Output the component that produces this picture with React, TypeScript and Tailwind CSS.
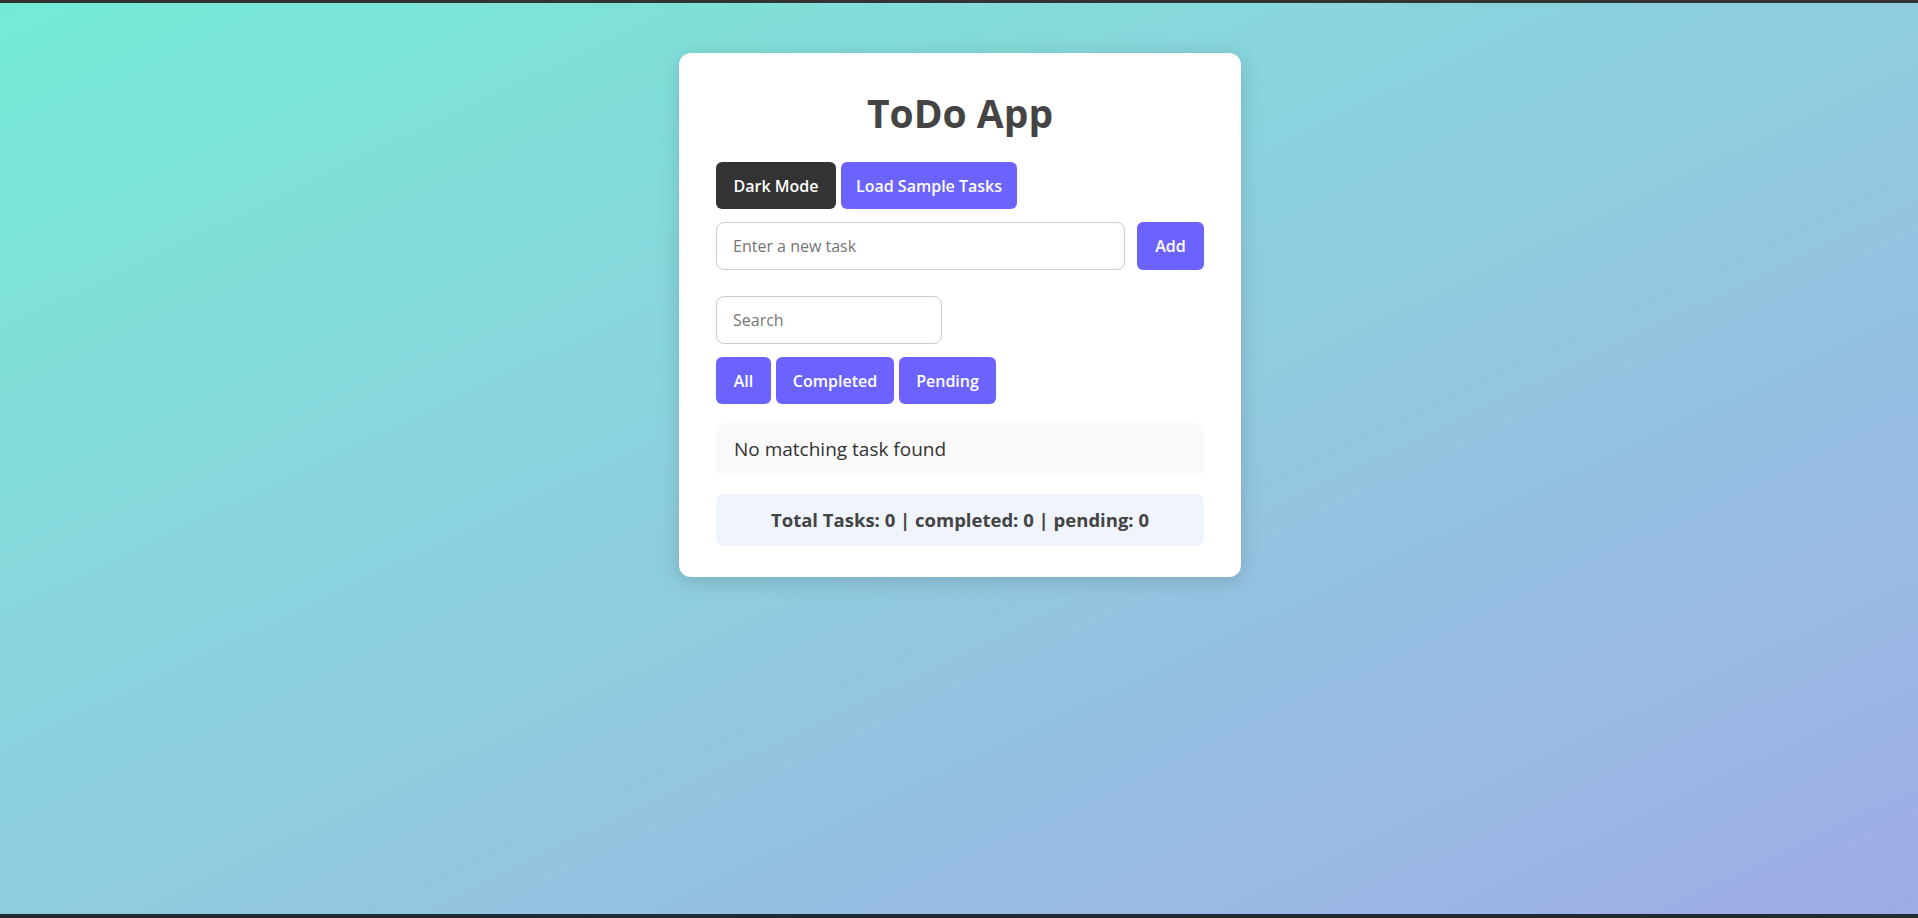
import { useState } from "react";

type Filter = "all" | "completed" | "pending";

interface Task {
  id: number;
  text: string;
  done: boolean;
}

const FONT = { fontFamily: '"Open Sans", "Noto Sans", sans-serif' };

export default function App() {
  const [tasks] = useState<Task[]>([]);
  const [filter, setFilter] = useState<Filter>("all");
  const [query, setQuery] = useState("");
  const [draft, setDraft] = useState("");

  const completed = tasks.filter((t) => t.done).length;
  const visible = tasks
    .filter((t) => (filter === "all" ? true : filter === "completed" ? t.done : !t.done))
    .filter((t) => t.text.toLowerCase().includes(query.toLowerCase()));

  return (
    <div className="flex h-[918px] w-full flex-col" style={FONT}>
      {/* top strip */}
      <div className="h-[3px] bg-[#333]" />

      <main className="flex flex-1 justify-center bg-gradient-to-br from-[#74ebd5] to-[#9face6]">
        <div className="mt-[50px] ml-[2px] h-fit w-[562px] rounded-[12px] bg-white px-[37px] pt-[36px] pb-[31px] shadow-[0_4px_20px_rgba(0,0,0,0.15)]">
          <h1 className="h-[48px] text-center text-[39px] leading-[48px] font-bold text-[#444]">
            ToDo App
          </h1>

          {/* Top actions */}
          <div className="mt-[25px] flex gap-[5px]">
            <button className="h-[47px] w-[120px] rounded-[6px] bg-[#333] text-[16px] font-semibold text-white">
              Dark Mode
            </button>
            <button className="h-[47px] w-[176px] rounded-[6px] bg-[#6c63ff] text-[16px] font-semibold text-white">
              Load Sample Tasks
            </button>
          </div>

          {/* New task */}
          <div className="mt-[13px] flex gap-[12px]">
            <input
              value={draft}
              onChange={(e) => setDraft(e.target.value)}
              placeholder="Enter a new task"
              className="h-[48px] w-[409px] rounded-[8px] border border-[#ccc] px-[16px] text-[16px] text-[#333] outline-none placeholder:text-[#757575]"
            />
            <button className="h-[48px] flex-1 rounded-[6px] bg-[#6c63ff] text-[16px] font-semibold text-white">
              Add
            </button>
          </div>

          {/* Search */}
          <input
            value={query}
            onChange={(e) => setQuery(e.target.value)}
            placeholder="Search"
            className="mt-[26px] block h-[48px] w-[226px] rounded-[8px] border border-[#ccc] px-[16px] text-[16px] text-[#333] outline-none placeholder:text-[#757575]"
          />

          {/* Filters */}
          <div className="mt-[13px] flex gap-[5px]">
            <button
              onClick={() => setFilter("all")}
              className="h-[47px] w-[55px] rounded-[6px] bg-[#6c63ff] text-[16px] font-semibold text-white"
            >
              All
            </button>
            <button
              onClick={() => setFilter("completed")}
              className="h-[47px] w-[118px] rounded-[6px] bg-[#6c63ff] text-[16px] font-semibold text-white"
            >
              Completed
            </button>
            <button
              onClick={() => setFilter("pending")}
              className="h-[47px] w-[97px] rounded-[6px] bg-[#6c63ff] text-[16px] font-semibold text-white"
            >
              Pending
            </button>
          </div>

          {/* List */}
          {visible.length === 0 ? (
            <div className="mt-[19px] flex h-[52px] items-center rounded-[8px] bg-[#f9f9f9] px-[18px] text-[19px] text-[#333]">
              No matching task found
            </div>
          ) : (
            <ul className="mt-[19px]">
              {visible.map((t) => (
                <li key={t.id} className="rounded-[8px] bg-[#f9f9f9] px-[18px] py-3">
                  {t.text}
                </li>
              ))}
            </ul>
          )}

          {/* Stats */}
          <div className="mt-[19px] flex h-[52px] items-center justify-center rounded-[8px] bg-[#eff4fd] text-[18.5px] font-bold text-[#444]">
            Total Tasks: {tasks.length} | completed: {completed} | pending: {tasks.length - completed}
          </div>
        </div>
      </main>

      {/* bottom strip */}
      <div className="h-[4px] bg-[#1f2a33]" />
    </div>
  );
}
